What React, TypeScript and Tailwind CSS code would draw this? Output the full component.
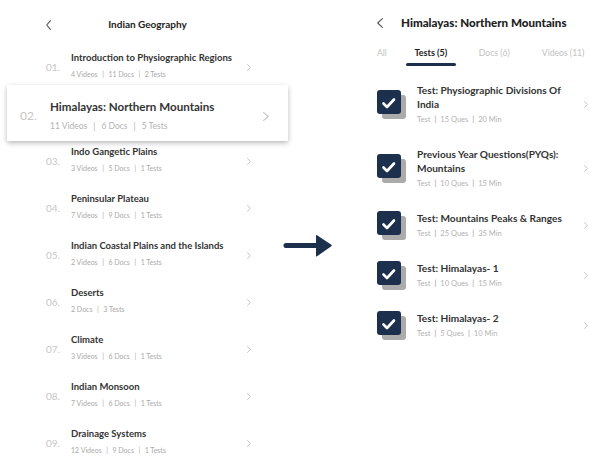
import React from "react";

const NAVY = "#1c2f4c";

const leftItems = [
  { n: "01.", t: "Introduction to Physiographic Regions", s: ["4 Videos", "11 Docs", "2 Tests"] },
  { n: "02.", t: "Himalayas: Northern Mountains", s: ["11 Videos", "6 Docs", "5 Tests"], active: true },
  { n: "03.", t: "Indo Gangetic Plains", s: ["3 Videos", "5 Docs", "1 Tests"] },
  { n: "04.", t: "Peninsular Plateau", s: ["7 Videos", "9 Docs", "1 Tests"] },
  { n: "05.", t: "Indian Coastal Plains and the Islands", s: ["2 Videos", "6 Docs", "1 Tests"] },
  { n: "06.", t: "Deserts", s: ["2 Docs", "3 Tests"] },
  { n: "07.", t: "Climate", s: ["3 Videos", "6 Docs", "1 Tests"] },
  { n: "08.", t: "Indian Monsoon", s: ["7 Videos", "6 Docs", "1 Tests"] },
  { n: "09.", t: "Drainage Systems", s: ["12 Videos", "9 Docs", "1 Tests"] },
];

const tests = [
  { t: ["Test: Physiographic Divisions Of", "India"], s: ["Test", "15 Ques", "20 Min"] },
  { t: ["Previous Year Questions(PYQs):", "Mountains"], s: ["Test", "10 Ques", "15 Min"] },
  { t: ["Test: Mountains Peaks & Ranges"], s: ["Test", "25 Ques", "35 Min"] },
  { t: ["Test: Himalayas- 1"], s: ["Test", "10 Ques", "15 Min"] },
  { t: ["Test: Himalayas- 2"], s: ["Test", "5 Ques", "10 Min"] },
];

function Chevron({ w = 5, h = 8, color = "#bdbdbd", sw = 1.1, left = false }: { w?: number; h?: number; color?: string; sw?: number; left?: boolean }) {
  return (
    <svg width={w} height={h} viewBox={`0 0 ${w} ${h}`} className="shrink-0 block">
      {left ? (
        <polyline points={`${w - 0.6},0.6 0.7,${h / 2} ${w - 0.6},${h - 0.6}`} fill="none" stroke={color} strokeWidth={sw} strokeLinecap="round" strokeLinejoin="round" />
      ) : (
        <polyline points={`0.6,0.6 ${w - 0.7},${h / 2} 0.6,${h - 0.6}`} fill="none" stroke={color} strokeWidth={sw} strokeLinecap="round" strokeLinejoin="round" />
      )}
    </svg>
  );
}

function Meta({ parts, className, sepClass }: { parts: string[]; className: string; sepClass: string }) {
  return (
    <div className={`flex items-center whitespace-nowrap ${className}`}>
      {parts.map((p, i) => (
        <React.Fragment key={i}>
          {i > 0 && <span className={sepClass}>|</span>}
          <span>{p}</span>
        </React.Fragment>
      ))}
    </div>
  );
}

function CheckIcon() {
  return (
    <div className="relative w-[29px] h-[29px] shrink-0">
      <div className="absolute left-[5px] top-[5px] w-[24px] h-[24px] rounded-[3px] bg-[#ababab]" />
      <div className="absolute left-0 top-0 w-[24px] h-[24px] rounded-[3px] flex items-center justify-center" style={{ background: NAVY }}>
        <svg width="24" height="24" viewBox="0 0 24 24">
          <polyline points="6.5,13.5 10,17 17,9.5" fill="none" stroke="#fff" strokeWidth="2.6" strokeLinecap="round" strokeLinejoin="round" />
        </svg>
      </div>
    </div>
  );
}

export default function App() {
  return (
    <div className="w-[589px] h-[458px] overflow-hidden bg-white flex font-['Lato','Open_Sans',sans-serif] text-[#333]">
      {/* Left screen */}
      <div className="w-[295px] shrink-0 flex flex-col">
        <div className="h-[43px] flex items-center pt-[6px] shrink-0">
          <div className="ml-[46px] w-[6px]">
            <Chevron left w={5} h={10} color="#555" sw={1.1} />
          </div>
          <div className="flex-1 text-center mr-[52px] text-[10px] font-bold text-[#222]">Indian Geography</div>
        </div>
        {leftItems.map((it) =>
          it.active ? (
            <div
              key={it.n}
              className="relative z-10 ml-[7px] mr-[7px] h-[56px] -mt-[5px] -mb-[4px] bg-white shadow-[0_2px_5px_rgba(0,0,0,0.28)] flex items-center pl-[13px] pr-[19px] shrink-0"
            >
              <div className="w-[30px] text-[12px] text-[#c6c6c6] pt-[6px]">{it.n}</div>
              <div className="flex-1 flex flex-col pt-[5px]">
                <div className="text-[11.6px] leading-[15px] font-bold text-[#333] whitespace-nowrap">{it.t}</div>
                <Meta parts={it.s} className="text-[8.5px] leading-[12px] text-[#b3b3b3] mt-[6px]" sepClass="mx-[6px]" />
              </div>
              <div className="pt-[6px]">
                <Chevron w={6} h={9} color="#c2c2c2" />
              </div>
            </div>
          ) : (
            <div key={it.n} className="h-[47px] shrink-0 flex items-center pl-[46px] pr-[44px]">
              <div className="w-[25px] text-[10px] text-[#c6c6c6] pt-[2px]">{it.n}</div>
              <div className="flex-1 flex flex-col pb-[4px]">
                <div className="text-[9.5px] leading-[13px] font-bold text-[#333] whitespace-nowrap">{it.t}</div>
                <Meta parts={it.s} className="text-[7px] leading-[10px] text-[#aaa] mt-[5px]" sepClass="mx-[4.5px]" />
              </div>
              <div className="pt-[2px]">
                <Chevron w={4} h={7} color="#c2c2c2" sw={1} />
              </div>
            </div>
          )
        )}
      </div>

      {/* Arrow */}
      <div className="w-[75px] -ml-[12px] shrink-0 pt-[234px]">
        <svg width="50" height="24" viewBox="0 0 50 24">
          <line x1="3" y1="11.5" x2="36" y2="11.5" stroke={NAVY} strokeWidth="5" strokeLinecap="round" />
          <path d="M33 1.5 Q33 0.5 34 1.2 L48 10.5 Q49.5 11.5 48 12.5 L34 22.3 Q33 23 33 22 Z" fill={NAVY} />
        </svg>
      </div>

      {/* Right screen */}
      <div className="w-[231px] min-w-0 shrink-0 flex flex-col pl-[19px]">
        <div className="h-[46px] flex items-center shrink-0">
          <div className="w-[6px] mr-[18px]">
            <Chevron left w={6} h={10} color="#555" sw={1.1} />
          </div>
          <div className="text-[11.6px] font-black text-[#222] whitespace-nowrap">Himalayas: Northern Mountains</div>
        </div>
        <div className="flex items-start h-[19px] text-[8.6px] leading-[12px] pt-[1px] shrink-0 whitespace-nowrap">
          <div className="text-[#c2c2c2]">All</div>
          <div className="ml-[19px] w-[50px] flex flex-col items-center">
            <div className="font-bold text-[#222] text-[9px]">Tests (5)</div>
            <div className="mt-[4px] w-[50px] h-[2.5px] rounded-full" style={{ background: NAVY }} />
          </div>
          <div className="ml-[23px] text-[#c2c2c2]">Docs (6)</div>
          <div className="ml-[32px] text-[#c2c2c2]">Videos (11)</div>
        </div>
        <div className="mt-[7px] flex flex-col">
          {tests.map((t, i) => (
            <div key={i} className="flex items-center py-[10.5px]">
              <CheckIcon />
              <div className="ml-[11px] flex-1 min-w-0 flex flex-col">
                {t.t.map((l, j) => (
                  <div key={j} className="text-[10.1px] leading-[14.4px] font-bold text-[#333] whitespace-nowrap">
                    {l}
                  </div>
                ))}
                <Meta parts={t.s} className="text-[7.5px] leading-[12px] text-[#b3b3b3] mt-[2.5px]" sepClass="mx-[4px] text-[#999]" />
              </div>
              <div className="pr-[1px]">
                <Chevron w={4} h={7} color="#c2c2c2" sw={1} />
              </div>
            </div>
          ))}
        </div>
      </div>
    </div>
  );
}
